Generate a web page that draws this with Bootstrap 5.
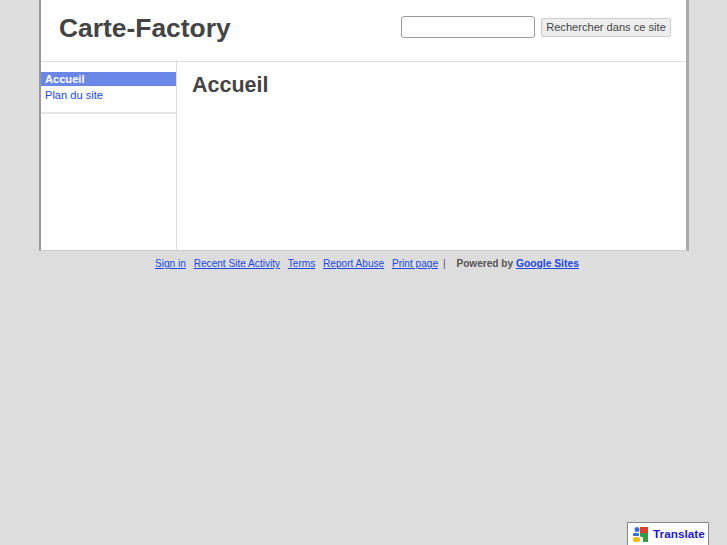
<!DOCTYPE html>
<html lang="fr">
<head>
<meta charset="utf-8">
<title>Carte-Factory</title>
<link href="https://cdn.jsdelivr.net/npm/bootstrap@5.3.0/dist/css/bootstrap.min.css" rel="stylesheet">
<style>
html, body { height: 100%; }
body { background: #ddd; font-family: "Liberation Sans", Arial, sans-serif; font-size: 11px; color: #444; overflow: hidden; }
.site-frame { width: 650px; height: 251px; margin-left: 39px; background: #fff; border-left: 2px solid #999; border-right: 3px solid #aaa; border-bottom: 1px solid #ccc; box-shadow: inset 1px 0 0 #fff; }
.site-head { height: 62px; border-bottom: 1px solid #ddd; padding: 2px 15px 7px 18px; }
.site-title { font-size: 26.4px; font-weight: 700; color: #444; line-height: 1; margin: 0; }
.search-group { margin-top: -2px; }
.search-box { width: 134px; height: 22px; border: 1px solid #999; border-radius: 3px; background: #fff; margin-right: 6px; padding: 0; }
.search-btn { height: 19px; width: 130px; padding: 0; font-size: 11.1px; line-height: 17px; color: #444; background: #eee; border: 1px solid #ccc; border-radius: 2px; white-space: nowrap; }
.side-col { width: 136px; border-right: 1px solid #ddd; flex: none; }
.side-nav { padding: 10px 0 10px; border-bottom: 2px solid #e6e6e6; height: 52px; }
.side-item { display: block; height: 14px; line-height: 14px; padding-left: 4px; font-size: 11.1px; color: #1a47e0; text-decoration: none; margin-bottom: 2px; }
.side-active { background: #6a87e8; color: #fff; font-weight: 700; }
.main-col { padding: 10px 15px; }
.page-title { font-size: 21.5px; font-weight: 700; color: #444; margin: 0; line-height: 26px; }
.foot-bar { height: 25px; margin-left: 155px; font-size: 10.1px; color: #555; line-height: 25px; white-space: nowrap; }
.foot-bar a { color: #1a47e0; margin-right: 5px; }
.foot-strong { font-weight: 700; margin-left: 8px; }
.foot-bar a.foot-brand { font-weight: 700; margin: 0; font-size: 10.3px; }
.translate-box { position: absolute; left: 627px; top: 522px; width: 82px; height: 23px; background: #fff; border: 1px solid #888; border-bottom: 0; padding: 3px 0 0 4px; color: #1a1ac8; font-weight: 700; font-size: 11.8px; }
</style>
</head>
<body>
<div class="site-frame d-flex flex-column">
  <div class="site-head d-flex align-items-center justify-content-between">
    <h1 class="site-title">Carte-Factory</h1>
    <div class="search-group d-flex align-items-center">
      <input class="search-box" type="text" aria-label="Recherche">
      <button class="search-btn" type="button">Rechercher dans ce site</button>
    </div>
  </div>
  <div class="d-flex flex-grow-1">
    <div class="side-col">
      <div class="side-nav">
        <a class="side-item side-active" href="#">Accueil</a>
        <a class="side-item" href="#">Plan du site</a>
      </div>
    </div>
    <div class="main-col flex-grow-1">
      <h2 class="page-title">Accueil</h2>
    </div>
  </div>
</div>
<div class="foot-bar">
  <a href="#">Sign in</a> <a href="#">Recent Site Activity</a> <a href="#">Terms</a> <a href="#">Report Abuse</a> <a href="#">Print page</a>| <span class="foot-strong">Powered by</span> <a class="foot-brand" href="#">Google Sites</a>
</div>
<div class="translate-box d-flex align-items-start gap-1">
  <svg width="17" height="17" viewBox="0 0 17 17" aria-hidden="true">
    <circle cx="5" cy="3.5" r="2.5" fill="#3a6fd8"/>
    <path d="M1 7.5q3-1.5 6 0v2.5h-6z" fill="#3a6fd8"/>
    <path d="M8 1h8v6h-8z" fill="#e0402a"/>
    <path d="M8 7h8v9h-5v-4.5l-3-1z" fill="#2f9e44"/>
    <ellipse cx="4.5" cy="13.5" rx="3.7" ry="2.6" fill="#f2b90f"/>
  </svg>
  <span>Translate</span>
</div>
</body>
</html>
